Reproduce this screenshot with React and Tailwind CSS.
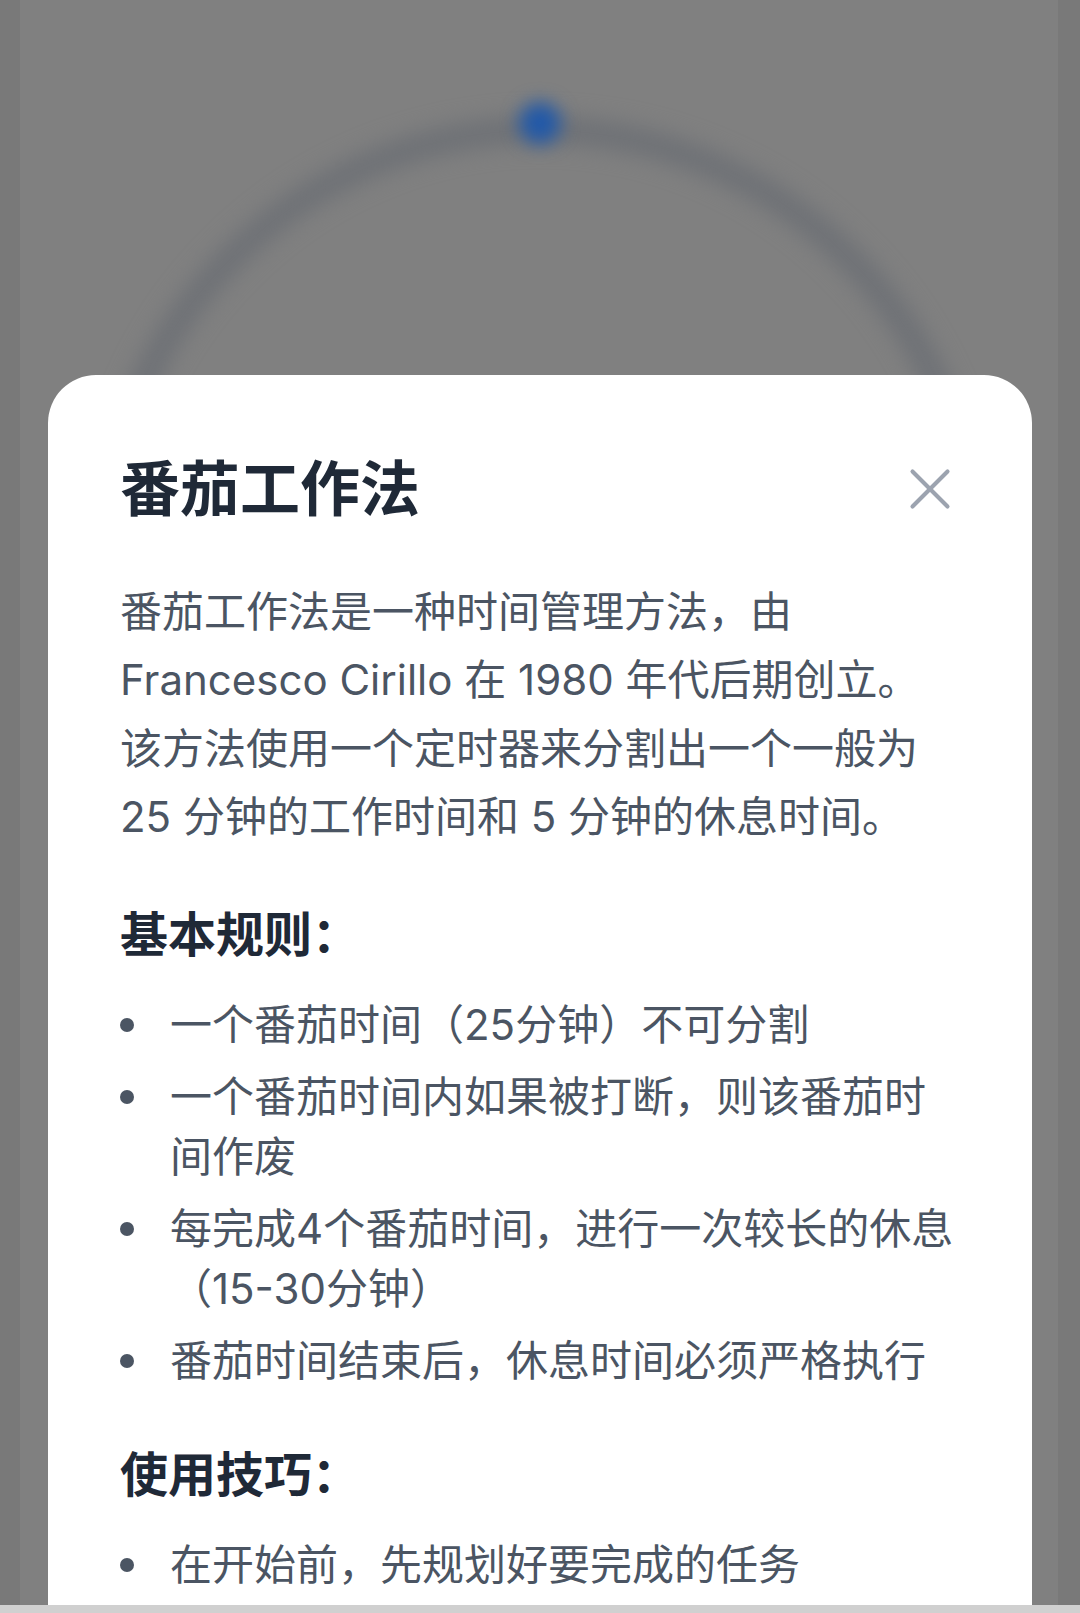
import React from 'react';

const rules = [
  '一个番茄时间（25分钟）不可分割',
  '一个番茄时间内如果被打断，则该番茄时间作废',
  '每完成4个番茄时间，进行一次较长的休息（15-30分钟）',
  '番茄时间结束后，休息时间必须严格执行',
];

const tips = [
  '在开始前，先规划好要完成的任务',
];

function TimerBackdrop() {
  return (
    <div className="absolute inset-0 bg-[#808080]">
      <svg width="1080" height="1613" className="absolute inset-0 blur-[11px]">
        <circle cx="540" cy="567" r="437" fill="none" stroke="#6d7075" strokeWidth="26" />
      </svg>
      <svg width="1080" height="1613" className="absolute inset-0 blur-[9px]">
        <circle cx="540" cy="123" r="21" fill="#2259a8" />
      </svg>
      <div className="absolute left-0 top-0 bottom-0 w-[20px] bg-black/5" />
      <div className="absolute right-0 top-0 bottom-0 w-[22px] bg-black/5" />
    </div>
  );
}

function CloseIcon() {
  return (
    <svg width="70" height="70" viewBox="0 0 24 24" fill="none" stroke="#9ca3af"
      strokeWidth="1.4" strokeLinecap="round" className="mr-[-5px] shrink-0">
      <path d="M18 6 6 18" />
      <path d="m6 6 12 12" />
    </svg>
  );
}

function BulletList({ items }) {
  return (
    <ul className="space-y-[12px]">
      {items.map(text => (
        <li key={text} className="flex gap-[36px] text-[42px] leading-[60px] text-[#4b5563]">
          <span className="shrink-0 w-[14px] h-[14px] rounded-full bg-[#4b5563] mt-[23px]" />
          <span>{text}</span>
        </li>
      ))}
    </ul>
  );
}

export default function App() {
  return (
    <div className="relative w-[1080px] h-[1613px] overflow-hidden flex flex-col"
      style={{ fontFamily: 'Inter, "Noto Sans CJK SC", sans-serif' }}>
      <TimerBackdrop />

      <div className="relative flex-1 min-h-0 pt-[375px] px-[48px] flex flex-col">
        <div className="flex-1 min-h-0 bg-white rounded-t-[48px] px-[72px] pt-[72px] overflow-hidden">
          <div className="flex items-center justify-between mb-[47px]">
            <h2 className="text-[60px] leading-[84px] font-bold text-[#1f2937]">番茄工作法</h2>
            <CloseIcon />
          </div>

          <p className="text-[42px] leading-[68.25px] text-[#4b5563]">
            番茄工作法是一种时间管理方法，由 Francesco Cirillo 在 1980 年代后期创立。该方法使用一个定时器来分割出一个一般为 25 分钟的工作时间和 5 分钟的休息时间。
          </p>

          <h3 className="mt-[48px] mb-[24px] text-[48px] leading-[72px] font-bold text-[#1f2937]">基本规则：</h3>
          <BulletList items={rules} />

          <h3 className="mt-[48px] mb-[24px] text-[48px] leading-[72px] font-bold text-[#1f2937]">使用技巧：</h3>
          <BulletList items={tips} />
        </div>
      </div>

      <div className="relative h-[8px] shrink-0 bg-[#d0d0d0]" />
    </div>
  );
}
